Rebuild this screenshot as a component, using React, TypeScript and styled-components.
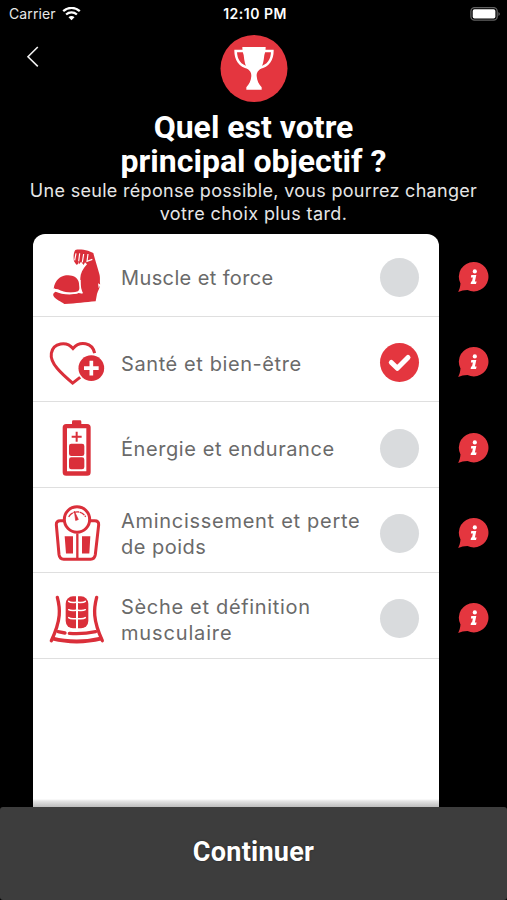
import React from 'react';
import styled, { createGlobalStyle } from 'styled-components';

const RED = '#e4363f';
const ICON_RED = '#da2f3a';

const GlobalStyle = createGlobalStyle`
  *, *::before, *::after { box-sizing: border-box; }
  body { margin: 0; background: #000; }
`;

const Screen = styled.div`
  width: 507px;
  height: 900px;
  display: flex;
  flex-direction: column;
  overflow: hidden;
  background: #000;
  color: #fff;
  font-family: Inter, 'Liberation Sans', sans-serif;
`;

const StatusBar = styled.div`
  display: grid;
  grid-template-columns: 1fr auto 1fr;
  align-items: center;
  height: 28px;
  padding: 0 6px 0 9px;
  font-size: 14px;
  line-height: 28px;
  color: #e8e8e8;
`;

const Carrier = styled.div`
  display: flex;
  align-items: center;
  gap: 6px;
  letter-spacing: 0.1px;
`;

const Clock = styled.div`
  font-weight: 600;
  letter-spacing: 0.5px;
  color: #fff;
`;

const Battery = styled.div`
  display: flex;
  justify-content: flex-end;
`;

const Header = styled.header`
  display: grid;
  grid-template-columns: 60px 1fr 60px;
  height: 81.500px;
`;

const BackButton = styled.button`
  display: flex;
  align-items: flex-start;
  padding: 18px 0 0 26px;
  border: 0;
  background: none;
`;

const Trophy = styled.div`
  display: flex;
  justify-content: center;
  padding-top: 7px;
`;

const Title = styled.h1`
  margin: 0;
  text-align: center;
  font: 700 32px/34px Roboto, 'Liberation Sans', sans-serif;
  letter-spacing: 0;
`;

const Subtitle = styled.p`
  margin: 1px 0 0;
  text-align: center;
  font-size: 18px;
  line-height: 23px;
  color: #e6e6e6;
`;

const Tracked = styled.span<{ $spacing: number }>`
  display: block;
  white-space: nowrap;
  letter-spacing: ${(p) => p.$spacing}px;
`;

const Body = styled.main`
  flex: 1;
  display: flex;
  min-height: 0;
  margin-top: 9.500px;
  padding-left: 33px;
`;

const Card = styled.div`
  width: 405.5px;
  overflow: hidden;
  border-radius: 12px 12px 0 0;
  background: linear-gradient(to bottom, #fff calc(100% - 8px), #e4e4e4 calc(100% - 6px), #bcbcbc 100%);
`;

const Options = styled.div`
  display: flex;
  flex-direction: column;
  margin-top: -2.4px;
`;

const Option = styled.label`
  display: grid;
  grid-template-columns: 58px 1fr 40px;
  column-gap: 15px;
  align-items: center;
  height: 85.4px;
  padding: 7px 19px 0 15px;
  border-bottom: 1.5px solid #dfdfdf;
`;

const OptionText = styled.div`
  padding-top: 2px;
  font-size: 20px;
  line-height: 26px;
  color: #6a6a6a;
`;

const Radio = styled.span<{ $checked?: boolean }>`
  display: flex;
  align-items: center;
  justify-content: center;
  width: 39px;
  height: 39px;
  border-radius: 50%;
  background: ${(p) => (p.$checked ? RED : '#d9dbdd')};
`;

const InfoColumn = styled.div`
  display: flex;
  flex-direction: column;
  margin-top: -2.4px;
`;

const InfoButton = styled.button`
  display: flex;
  align-items: center;
  height: 85.4px;
  padding: 5px 0 0 18px;
  border: 0;
  background: none;
`;

const Footer = styled.button`
  height: 93px;
  padding: 0 0 4px;
  border: 0;
  border-radius: 3px;
  background: #3d3d3d;
  color: #fff;
  font: 700 27px/32px Roboto, 'Liberation Sans', sans-serif;
  letter-spacing: 0.25px;
  text-shadow: 0 0 2px rgba(0, 0, 0, 0.5);
`;

const WifiIcon = () => (
  <svg width="19" height="15" viewBox="0 0 19 15" fill="none" stroke="#fff" strokeWidth="2.3">
    <path d="M1.2 4.2C6 -.2 13 -.2 17.8 4.2" />
    <path d="M4.1 7.5C7.2 4.6 11.8 4.6 14.9 7.5" />
    <path d="M9.5 13.200 6.5 10.200C8 8.700 11 8.700 12.5 10.200Z" fill="#fff" stroke="none" />
  </svg>
);

const BatteryIcon = () => (
  <svg width="31" height="15" viewBox="0 0 31 15">
    <rect x=".9" y=".6" width="26.3" height="12.600" rx="3.6" fill="none" stroke="#626262" strokeWidth="1.3" />
    <rect x="2.7" y="2.3" width="22.7" height="9.2" rx="1.8" fill="#fff" />
    <path d="M28.5 5Q31 7 28.5 9Z" fill="#777" />
  </svg>
);

const BackIcon = () => (
  <svg width="14" height="22" viewBox="0 0 14 22" fill="none" stroke="#f0f0f0" strokeWidth="1.6">
    <path d="M11.8 1 2 10.8 11.8 20.4" />
  </svg>
);

const TrophyIcon = () => (
  <svg width="68" height="67" viewBox="660 105 204 201">
    <circle cx="762" cy="205.5" r="100.5" fill={RED} />
    <path
      d="M727 141H797C797 152 795 160 793 165C791 184 788 198 782 206C771 214 770 220 770 228C771 242 776 252 785 262V269H739V262C748 252 753 242 754 228C754 220 753 214 742 206C736 198 733 184 731 165C729 160 727 152 727 141Z"
      fill="#fff"
    />
    <path
      d="M729 153H707C707 177 719 198 745 203M795 153H817C817 177 805 198 779 203"
      fill="none" stroke="#fff" strokeWidth="8"
    />
  </svg>
);

const MuscleIcon = () => (
  <svg width="58" height="58" viewBox="54 54 174 174" fill={ICON_RED}>
    <path d="M136 60C147 57 162 60 174 62L190 69C194 86 201 106 208 132C211 143 209 149 210 160C212 171 204 181 201 192L197 214C166 216 140 221 103 222C93 215 77 209 71 199C67 192 72 187 77 185C92 191 119 198 146 189L158 191C149 176 151 154 151 144C151 132 158 117 171 103L165 97L161 105L153 95L148 102L144 95L145 102L139 104L132 94C130 82 130 69 136 60Z" />
    <path d="M71 176C75 150 91 139 108 136C126 133 143 142 146 155C149 169 150 178 144 184C120 193 98 185 84 178Z" />
    <path d="M138 70 134 91M149 70 146 94M161 72 157 97M174 72 171 94 187 88" fill="none" stroke="#fff" strokeWidth="3.5" />
    <path d="M150 150C150 160 149 177 157 189M71 176C86 187 108 193 143 188" fill="none" stroke="#fff" strokeWidth="4" />
    <path d="M204 160 206 174 212 164Z" fill="#fff" />
  </svg>
);

const HeartIcon = () => (
  <svg width="58" height="58" viewBox="54 40.5 174 174" fill="none">
    <path
      d="M194 98C187 66 150 60 129 84C110 61 70 66 64 98C59 128 94 159 128 188L151 170"
      stroke={ICON_RED} strokeWidth="9"
    />
    <circle cx="184" cy="143" r="43" fill="#fff" />
    <circle cx="184" cy="143" r="38.5" fill={ICON_RED} />
    <path d="M184 121V165M162 143H206" stroke="#fff" strokeWidth="11" />
  </svg>
);

const BatteryChargeIcon = () => (
  <svg width="58" height="58" viewBox="54 42 174 174" fill={ICON_RED}>
    <rect x="126" y="46" width="28" height="18" rx="4" />
    <rect x="104.500" y="63.500" width="71" height="142" rx="4" fill="none" stroke={ICON_RED} strokeWidth="13" />
    <path d="M140 80V110M125 95H155" stroke={ICON_RED} strokeWidth="6" />
    <rect x="117" y="116" width="46" height="37" rx="7" />
    <rect x="117" y="157" width="46" height="36" rx="7" />
  </svg>
);

const ScaleIcon = () => (
  <svg width="58" height="58" viewBox="54 43.5 174 174" fill="none" stroke={ICON_RED}>
    <path
      d="M105 94H91Q78 94 79 106L87 195Q89 209 101 209H182Q194 209 196 195L206 106Q207 94 194 94H178"
      strokeWidth="9"
    />
    <path d="M142 132V207" strokeWidth="7" />
    <circle cx="141" cy="90" r="38" fill="#fff" strokeWidth="9" />
    <path d="M116 82C128 62 155 62 167 82" strokeWidth="4" strokeDasharray="17 2" />
    <path d="M133 65 145 90 137 93Z" fill={ICON_RED} strokeWidth="2" />
    <path d="M104 140H129V192H108ZM156 140H181L178 192H156Z" fill={ICON_RED} stroke="none" />
  </svg>
);

const AbsIcon = () => (
  <svg width="58" height="58" viewBox="54 45 174 174" fill="none" stroke={ICON_RED} strokeLinecap="round">
    <path d="M82 67C91 101 94 134 64 197M200 67C191 101 188 134 217 197" strokeWidth="10" />
    <path d="M69 191C112 202 168 202 212 191" strokeWidth="12" />
    <path d="M84 170 105 174M118 175C147 177 173 175 197 170" strokeWidth="10" />
    <rect x="107" y="64" width="68" height="96" rx="22" fill={ICON_RED} stroke="none" />
    <path d="M141 62V162" stroke="#fff" strokeWidth="6" />
    <path
      d="M116 79Q122 84 138 82M144 82Q160 84 166 79M116 104Q122 108 138 106M144 106Q160 108 166 104M116 128Q122 133 138 131M144 131Q160 133 166 128"
      stroke="#fff" strokeWidth="4.5"
    />
  </svg>
);

const CheckIcon = () => (
  <svg width="39" height="39" viewBox="0 0 39 39" fill="none" stroke="#fff" strokeWidth="5" strokeLinecap="round" strokeLinejoin="round">
    <path d="M11.300 19.500 17.300 25.300 28 14.500" />
  </svg>
);

const InfoIcon = () => (
  <svg width="32" height="32" viewBox="0 0 32 32">
    <path d="M16.500 1A14.700 14.700 0 1 1 10.500 29C7 29 4 29.700 1.200 31C2.400 28.500 3.200 26 3.500 22.500A14.700 14.700 0 0 1 16.500 1Z" fill={RED} />
    <circle cx="17.800" cy="10.400" r="2.100" fill="#fff" />
    <path d="M14.300 14H19.300L17.900 20.600H19.600L19 23H13.600L14.100 20.600H15L15.900 16.400H13.900Z" fill="#fff" />
  </svg>
);

const options: { icon: React.FC; lines: [string, number][]; checked?: boolean }[] = [
  { icon: MuscleIcon, lines: [['Muscle et force', 0.38]] },
  { icon: HeartIcon, lines: [['Santé et bien-être', 0.59]], checked: true },
  { icon: BatteryChargeIcon, lines: [['Énergie et endurance', 0.58]] },
  { icon: ScaleIcon, lines: [['Amincissement et perte', 0.71], ['de poids', 0.5]] },
  { icon: AbsIcon, lines: [['Sèche et définition', 0.68], ['musculaire', 0.85]] },
];

export default function App() {
  return (
    <Screen>
      <GlobalStyle />
      <StatusBar>
        <Carrier>Carrier <WifiIcon /></Carrier>
        <Clock>12:10 PM</Clock>
        <Battery><BatteryIcon /></Battery>
      </StatusBar>
      <Header>
        <BackButton aria-label="Retour"><BackIcon /></BackButton>
        <Trophy><TrophyIcon /></Trophy>
      </Header>
      <Title>Quel est votre<br />principal objectif ?</Title>
      <Subtitle>
        <Tracked $spacing={0.3}>Une seule réponse possible, vous pourrez changer</Tracked>
        <Tracked $spacing={0.4}>votre choix plus tard.</Tracked>
      </Subtitle>
      <Body>
        <Card>
          <Options>
            {options.map(({ icon: Icon, lines, checked }) => (
              <Option key={lines[0][0]}>
                <Icon />
                <OptionText>
                  {lines.map(([text, spacing]) => (
                    <Tracked key={text} $spacing={spacing}>{text}</Tracked>
                  ))}
                </OptionText>
                <Radio $checked={checked}>{checked && <CheckIcon />}</Radio>
              </Option>
            ))}
          </Options>
        </Card>
        <InfoColumn>
          {options.map(({ lines }) => (
            <InfoButton key={lines[0][0]} aria-label="Informations"><InfoIcon /></InfoButton>
          ))}
        </InfoColumn>
      </Body>
      <Footer>Continuer</Footer>
    </Screen>
  );
}
